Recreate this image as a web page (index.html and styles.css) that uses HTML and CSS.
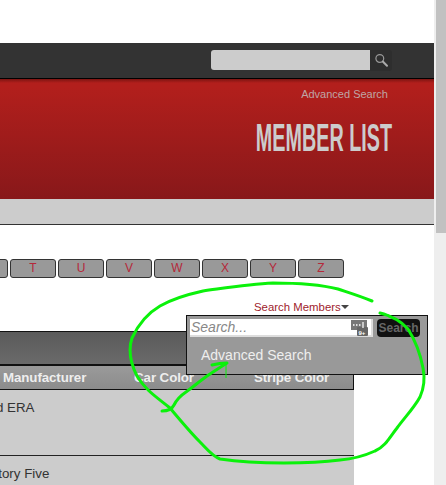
FILE: index.html
```html
<!DOCTYPE html>
<html lang="en">
<head>
<meta charset="utf-8">
<title>Member List</title>
<link rel="stylesheet" href="styles.css">
</head>
<body>
<div class="viewport">
  <div class="page">
    <div class="topbar">
      <div class="top-search">
        <div class="top-input"></div>
        <div class="top-btn">
          <svg width="15" height="15" viewBox="0 0 15 15"><circle cx="5.8" cy="5.5" r="3.9" fill="none" stroke="#999" stroke-width="1.2"/><path d="M8.8 8.5L13 12.8" stroke="#aaa" stroke-width="2" stroke-linecap="round"/></svg>
        </div>
      </div>
    </div>
    <header class="hero">
      <a class="hero-link">Advanced Search</a>
      <h1 class="hero-title">MEMBER LIST</h1>
    </header>
    <div class="subnav"></div>
    <nav class="letters">
      <a class="letter">S</a><a class="letter">T</a><a class="letter">U</a><a class="letter">V</a><a class="letter">W</a><a class="letter">X</a><a class="letter">Y</a><a class="letter">Z</a>
    </nav>
    <div class="search-row">
      <a class="search-toggle">Search Members<span class="caret"></span></a>
      <div class="search-panel">
        <div class="panel-row">
          <div class="panel-input">
            <input class="panel-field" type="text" placeholder="Search...">
            <svg class="pass-icon" width="17" height="17" viewBox="0 0 17 17">
              <rect x="0" y="1" width="16" height="10" fill="#777"/>
              <rect x="6" y="8" width="11" height="9" rx="1" fill="#666"/>
              <path d="M2 6h1.5M5 6h1.5M8 6h1.5" stroke="#fff" stroke-width="1.6"/>
              <path d="M12 3v6" stroke="#fff" stroke-width="1.2"/>
              <text x="7.5" y="15.5" class="pass-text">9+</text>
            </svg>
          </div>
          <button class="panel-btn" type="button">Search</button>
        </div>
        <a class="panel-link">Advanced Search</a>
      </div>
    </div>
    <section class="table">
      <div class="table-title"></div>
      <div class="table-head">
        <div class="th th-first">Manufacturer</div>
        <div class="th">Car Color</div>
        <div class="th">Stripe Color</div>
      </div>
      <div class="table-row row-tall"><div class="td">Ford ERA</div></div>
      <div class="table-row"><div class="td">Factory Five</div></div>
    </section>
  </div>
  <div class="scrollbar"><div class="thumb"></div></div>
</div>
<svg class="scribble" width="446" height="485" viewBox="0 0 446 485">
  <path class="ink" d="M372 301C360 296 350 293 338 289C318 284 296 283 273 283C250 284 232 287 203 291C185 295 172 299 160 306C148 313 138 325 132 338C128 350 130 362 137 376C146 391 158 398 170 408C180 420 190 432 200 442C207 449 212 456 220 459C240 462 262 463 284 463C305 463 325 462 340 460C352 459 364 456 375 451C385 447 390 437 397 428C405 417 414 408 420 397C424 388 425 378 423 368C420 352 415 340 408 329C400 320 392 316 380 313"/>
  <path class="ink" d="M162 411C168 411 172 409 174 405C177 399 180 396 186 392C193 387 200 381 207 376C213 372 219 368 227 363C222 363 216 364 212 365"/>
  <path class="ink-thin" d="M226 363V378"/>
</svg>
</body>
</html>
```

FILE: styles.css
```css
* { box-sizing: border-box; }
html, body { margin: 0; padding: 0; height: 100%; overflow: hidden; background: #fff; }
body { font-family: "Liberation Sans", Arial, sans-serif; }
.viewport { display: flex; width: 446px; height: 485px; overflow: hidden; }
.page { width: 434px; height: 485px; overflow: hidden; flex: none; padding-top: 43px; }
.scrollbar { width: 12px; height: 485px; background: #eee; padding-left: 2px; flex: none; }
.thumb { width: 10px; height: 233px; background: #c1c1c1; }

.topbar { height: 36px; background: #333; border-bottom: 1px solid #000; display: flex; justify-content: flex-end; padding: 7px 42px 0 0; }
.top-search { display: flex; height: 21px; }
.top-input { width: 159px; height: 20px; background: #ccc; border-radius: 3px 0 0 3px; }
.top-btn { width: 22px; height: 21px; background: #2e2e2e; border-radius: 0 3px 3px 0; display: flex; align-items: center; justify-content: center; }

.hero { height: 120px; background: linear-gradient(#7c1512 0, #b21f1c 4px, #b21f1c 8px, #88181a 100%); padding: 8px 42px 0 0; text-align: right; }
.hero-link { display: block; margin-right: 4px; font-size: 11px; line-height: 14px; color: #bfa5a5; }
.hero-title { margin: 17px 0 0; font-weight: 700; font-size: 39px; line-height: 40px; color: #ccc; transform: scaleX(.507); transform-origin: right; white-space: nowrap; }

.subnav { height: 26px; background: #ccc; border-bottom: 1px solid #333; }

.letters { display: flex; gap: 2px; justify-content: flex-end; margin-top: 34px; padding-right: 90px; height: 19px; }
.letter { flex: none; width: 46px; height: 19px; background: #999; border: 1px solid #333; border-radius: 3px; color: #b5283a; font-size: 12px; line-height: 17px; text-align: center; }

.search-row { position: relative; height: 53px; }
.search-toggle { position: absolute; left: 254px; top: 22px; font-size: 11.4px; line-height: 14px; color: #a01c2c; white-space: nowrap; }
.caret { display: inline-block; width: 0; height: 0; margin-left: 0; vertical-align: 2px; border-style: solid; border-width: 4px 4px 0; border-color: #444 transparent transparent; }
.search-panel { position: absolute; z-index: 2; left: 186px; top: 37px; width: 242px; height: 60px; background: #999; border: 1px solid #111; padding: 3px 3px 0 3px; }
.panel-row { display: flex; gap: 4px; }
.panel-input { width: 183px; height: 18px; background: #fff; border-bottom: 2px solid #ddd; border-right: 2px solid #ddd; display: flex; align-items: center; position: relative; }
.panel-field { flex: 1; min-width: 0; border: 0; padding: 0 0 0 1px; height: 16px; background: transparent; font: italic 14px "Liberation Sans", Arial, sans-serif; outline: 0; }
.panel-field::placeholder { color: #888; opacity: 1; }
.pass-icon { flex: none; margin-right: 3px; }
.pass-text { font: 700 6px "Liberation Sans", Arial, sans-serif; fill: #fff; }
.panel-btn { width: 43px; height: 18px; margin-top: 0; padding: 0; border: 0; border-radius: 4px; background: #111; color: #666; font: 700 12px "Liberation Sans", Arial, sans-serif; }
.panel-link { display: block; margin: 10px 0 0 11px; font-size: 14px; line-height: 16px; color: #eee; }

.table { width: 384px; margin-left: -30px; }
.table-title { height: 35px; background: linear-gradient(#5a5a5a, #6a6a6a); border-top: 1px solid #111; border-bottom: 2px solid #111; }
.table-head { display: grid; grid-template-columns: 129px 130px 125px; height: 24px; background: linear-gradient(#9a9a9a, #8c8c8c); border-bottom: 1px solid #111; border-right: 1px solid #111; }
.th { font-size: 13.33px; font-weight: 700; line-height: 23px; letter-spacing: -.1px; color: #eee; text-align: center; }
.th-first { text-align: left; padding-left: 33px; }
.table-row { background: #ccc; border-bottom: 1px solid #222; min-height: 30px; padding: 0 0 0 6px; }
.row-tall { height: 66px; padding-top: 10px; }
.table-row:last-child { border-bottom: 0; padding-top: 10px; }
.td { font-size: 13.33px; line-height: 16px; color: #333; }

.scribble { position: absolute; left: 0; top: 0; z-index: 5; pointer-events: none; }
.ink { fill: none; stroke: #0bf10b; stroke-width: 3; stroke-linecap: round; stroke-linejoin: round; }
.ink-thin { fill: none; stroke: #0bf10b; stroke-width: 1; }
```
